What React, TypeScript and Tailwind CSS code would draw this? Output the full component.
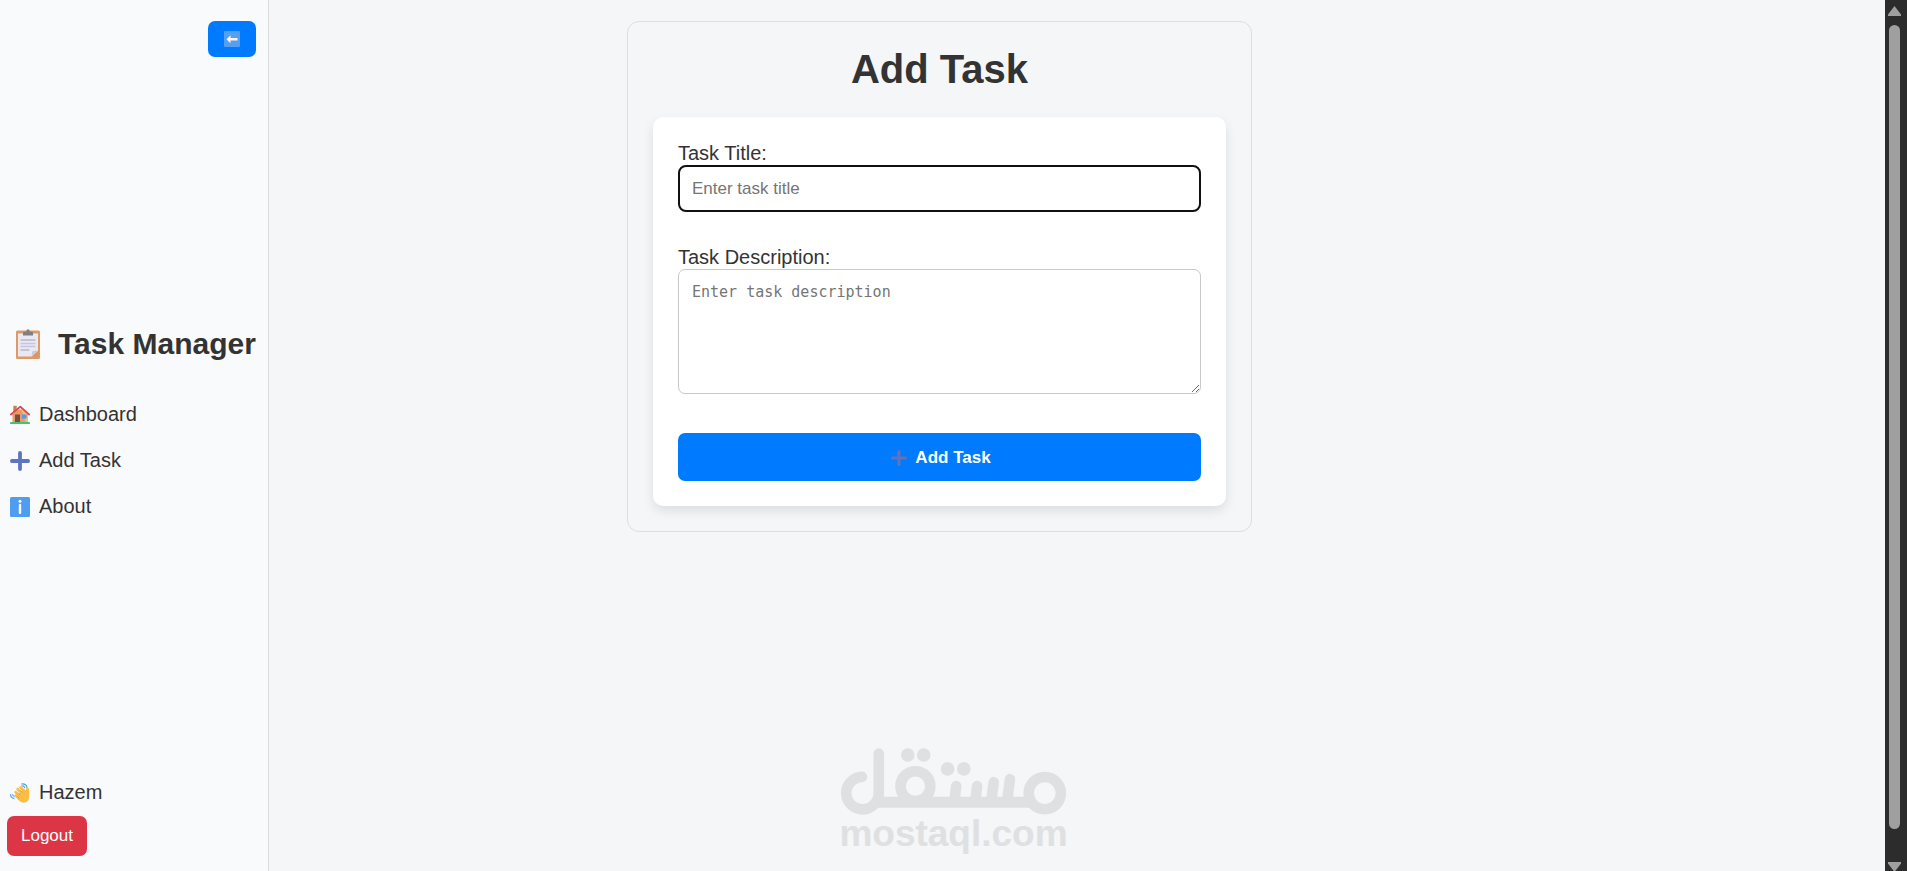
import type { ReactNode } from "react";

type IconProps = { className?: string };

function BackArrowIcon({ className }: IconProps) {
  return (
    <svg viewBox="0 0 16 16" className={className} aria-hidden="true">
      <rect width="16" height="16" rx="1" fill="#559ff0" />
      <path d="M2.500 8.200 6.500 4.200v2.800h7v2.400h-7v2.800z" fill="#fff4fa" />
    </svg>
  );
}

function ClipboardIcon({ className }: IconProps) {
  return (
    <svg viewBox="0 0 30 30" className={className} aria-hidden="true">
      <rect x="3" y="1.500" width="24" height="28.500" rx="1.500" fill="#dd9a66" />
      <path d="M5 4.500h20V22l-6 5.500H5z" fill="#e9e9f3" />
      <path d="M25 22v5.500h-6z" fill="#d8946a" />
      <path d="M25 21.500 18.500 27.500l1-5.500z" fill="#c9c9d4" />
      <path d="M10 6.500V4q0-1 1-1.300h2.200Q13.500.3 15 .3t1.800 2.400H19q1 .3 1 1.300v2.500z" fill="#7d7f83" />
      <path d="M7.500 11h15M7.500 21h9" stroke="#9fa0a8" strokeWidth="1.200" />
      <path d="M7.500 14.500h15M7.500 17.500h15" stroke="#c5c4e2" strokeWidth="1.600" />
    </svg>
  );
}

function HouseIcon({ className }: IconProps) {
  return (
    <svg viewBox="0 0 20 20" className={className} aria-hidden="true">
      <path d="M3.300.800h3.400v6H3.300z" fill="#c98052" />
      <path d="M2.500 9.500 7 4.500h7l4 5V18h-15.500z" fill="#e89c62" />
      <path d="M10.500 2 18 9.500V18h-2z" fill="#f6cf9a" opacity=".6" />
      <path d="M0 18q0-1 1-1h18q1 0 1 1v1H0z" fill="#41c476" />
      <path d="M5 9.500h5V17H5z" fill="#7a4c3e" />
      <path d="M12 9.500h4.500v4H12z" fill="#4c9bf0" />
      <path d="M.9 9.500 10.300 1.600 19.100 9.500" fill="none" stroke="#dd4650" strokeWidth="1.800" strokeLinecap="round" strokeLinejoin="round" />
    </svg>
  );
}

function PlusIcon({ className }: IconProps) {
  return (
    <svg viewBox="0 0 20 20" className={className} aria-hidden="true">
      <path d="M10 1.900v16.200M1.900 10h16.200" stroke="currentColor" strokeWidth="3.800" strokeLinecap="round" />
    </svg>
  );
}

function InfoIcon({ className }: IconProps) {
  return (
    <svg viewBox="0 0 20 20" className={className} aria-hidden="true">
      <rect width="20" height="20" rx="1.500" fill="#4e9df0" />
      <circle cx="10" cy="4.200" r="1.500" fill="#fff" />
      <path d="M10 8v7.800" stroke="#fff" strokeWidth="2.400" strokeLinecap="round" />
    </svg>
  );
}

function WaveIcon({ className }: IconProps) {
  return (
    <svg viewBox="0 0 20 20" className={className} aria-hidden="true">
      <path
        d="M5.800 12.600 9.500 16M5.600 9.300l5 4.300M7.600 6.300l5 4.800M10.700 4.400l4.200 4.500"
        stroke="#fbbe43"
        strokeWidth="2.700"
        strokeLinecap="round"
      />
      <path d="M7 12.500 14 6l1.500 1.500q.2-2.500 1.800-3 1.900 0 1.900 2.500v6q0 6.700-5.600 6.700-2.700 0-5.700-3.200z" fill="#fbbe43" />
      <path d="m8 10.300 2 1.600M10 7.300l2.200 2M7.300 13.500l1.500 1.200" stroke="#df8f35" strokeWidth=".7" strokeLinecap="round" />
      <path
        d="M.6 11.500q0 3.500 3.400 3.800M2.600 11.500q.2 1.500 1.700 1.800M12 .9q4.300-.2 5 3.600M11.800 2.700q2.300 0 2.900 2"
        fill="none"
        stroke="#4b9fe8"
        strokeWidth="1.100"
        strokeLinecap="round"
      />
    </svg>
  );
}

function NavLink({ href, icon, children }: { href: string; icon: ReactNode; children: ReactNode }) {
  return (
    <li>
      <a href={href} className="flex h-[46px] items-center gap-[9px] px-2.5 text-[20px] leading-[23px]">
        {icon}
        {children}
      </a>
    </li>
  );
}

function Sidebar() {
  return (
    <aside className="flex w-[269px] shrink-0 flex-col border-r border-[#d9dbde] bg-[#f8fafc] pt-[21px] pb-[15px]">
      <button
        type="button"
        aria-label="Collapse sidebar"
        className="mr-3 mb-[18px] flex h-9 w-12 items-center justify-center self-end rounded-[7px] bg-[#007bff]"
      >
        <BackArrowIcon className="size-4" />
      </button>

      <div className="flex flex-1 flex-col justify-center">
        <h2 className="mb-[31px] flex items-center gap-[15px] pl-[13px] text-[30px] leading-[34px] font-bold whitespace-nowrap">
          <ClipboardIcon className="size-[30px]" />
          Task Manager
        </h2>
        <nav>
          <ul>
            <NavLink href="#dashboard" icon={<HouseIcon className="size-5" />}>
              Dashboard
            </NavLink>
            <NavLink href="#add-task" icon={<PlusIcon className="size-5 text-[#5d74bf]" />}>
              Add Task
            </NavLink>
            <NavLink href="#about" icon={<InfoIcon className="size-5" />}>
              About
            </NavLink>
          </ul>
        </nav>
      </div>

      <div className="flex flex-col items-start gap-3">
        <p className="flex items-center gap-[9px] px-2.5 text-[20px] leading-[23px]">
          <WaveIcon className="size-5" />
          Hazem
        </p>
        <button
          type="button"
          className="ml-[7px] h-10 rounded-[7px] bg-[#dc3545] px-3.5 text-[17px] leading-5 text-white"
        >
          Logout
        </button>
      </div>
    </aside>
  );
}

function AddTaskForm() {
  return (
    <section className="w-full max-w-[625px] rounded-xl border border-[#dcdfe2] p-[25px]">
      <h1 className="mb-[26px] text-center text-[40px] leading-[44px] font-bold">Add Task</h1>
      <form
        className="flex flex-col rounded-[10px] bg-white p-[25px] shadow-[0_5px_12px_rgba(0,0,0,0.1)]"
        onSubmit={(event) => event.preventDefault()}
      >
        <label htmlFor="task-title" className="text-[20px] leading-[23px]">
          Task Title:
        </label>
        <input
          id="task-title"
          type="text"
          placeholder="Enter task title"
          className="mb-[34px] h-[47px] w-full rounded-lg border-2 border-[#101010] bg-white px-3 text-[17px] outline-none placeholder:text-[#757575]"
        />
        <label htmlFor="task-description" className="text-[20px] leading-[23px]">
          Task Description:
        </label>
        <textarea
          id="task-description"
          placeholder="Enter task description"
          className="mb-[39px] h-[125px] w-full resize-y rounded-[7px] border border-[#c8c8c8] bg-white px-[13px] py-3 font-['DejaVu_Sans_Mono',monospace] text-[15px] leading-5 outline-none placeholder:text-[#757575]"
        />
        <button
          type="submit"
          className="flex h-12 w-full items-center justify-center gap-2 rounded-[7px] bg-[#007bff] pt-px pl-[3px] text-[17px] font-bold text-white"
        >
          <PlusIcon className="size-4 text-[#6672b8]" />
          Add Task
        </button>
      </form>
    </section>
  );
}

function Watermark() {
  return (
    <div className="pointer-events-none absolute bottom-[19px] left-1/2 flex -translate-x-1/2 flex-col items-center text-[#dfe0e2]">
      <svg viewBox="60 57 681 202" className="h-[67px] w-[227px]" aria-hidden="true">
        <g fill="none" stroke="currentColor" strokeWidth="32" strokeLinecap="round">
          <path d="M125 144a49 49 0 1 0 50.500 49V74" />
          <path d="M160 220.500h474" strokeWidth="33" strokeLinecap="butt" />
          <circle cx="286" cy="172" r="45" />
          <path d="m409 172-5 42M472 172l-5 42M522 160l-7 54M571 151l-8 63" />
          <circle cx="676" cy="193" r="48.500" />
        </g>
        <g fill="currentColor">
          <circle cx="263" cy="78" r="20.500" />
          <circle cx="311" cy="78" r="20.500" />
          <circle cx="383" cy="120" r="20.500" />
          <circle cx="432" cy="120" r="20.500" />
        </g>
      </svg>
      <span className="text-[37px] leading-[37px] font-bold">mostaql.com</span>
    </div>
  );
}

function ScrollTrack() {
  return (
    <div className="flex w-[22px] shrink-0 flex-col items-center overflow-hidden bg-[#2c2c2c] pt-1.5 pr-[3px]" aria-hidden="true">
      <svg viewBox="0 0 13 10" className="h-2.5 w-[13px] shrink-0">
        <path d="M6.500 0 13 8.500V10H0V8.500z" fill="#9f9f9f" />
      </svg>
      <div className="mt-[9px] mb-[33px] w-[11px] flex-1 rounded-full bg-[#9f9f9f]" />
      <svg viewBox="0 0 13 10" className="-mb-px h-2.5 w-[13px] shrink-0">
        <path d="M0 0h13v1.500L6.500 10 0 1.500z" fill="#9f9f9f" />
      </svg>
    </div>
  );
}

export default function App() {
  return (
    <div className="relative flex h-screen overflow-hidden bg-[#f4f6f8] font-['Liberation_Sans',Arial,sans-serif] text-[#333]">
      <Sidebar />
      <main className="flex flex-1 items-start justify-center pt-[21px] pr-[275px]">
        <AddTaskForm />
      </main>
      <ScrollTrack />
      <Watermark />
    </div>
  );
}
